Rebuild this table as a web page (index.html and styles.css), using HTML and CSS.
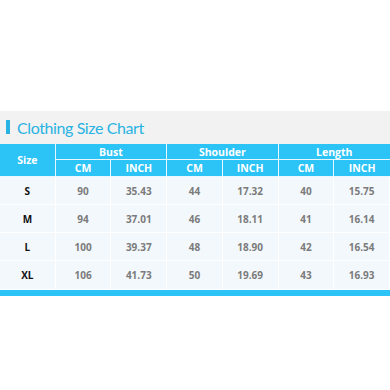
FILE: index.html
```html
<!DOCTYPE html>
<html>
<head>
<meta charset="utf-8">
<link rel="stylesheet" href="styles.css">
</head>
<body>
<div class="top"></div>
<section class="panel">
  <h1 class="title"><span class="accent"></span>Clothing Size Chart</h1>
  <div class="chart">
    <div class="hd size">Size</div>
    <div class="hd grp">Bust</div>
    <div class="hd grp">Shoulder</div>
    <div class="hd grp">Length</div>
    <div class="hd sub">CM</div><div class="hd sub">INCH</div>
    <div class="hd sub">CM</div><div class="hd sub">INCH</div>
    <div class="hd sub">CM</div><div class="hd sub">INCH</div>

    <div class="c s">S</div><div class="c">90</div><div class="c">35.43</div><div class="c">44</div><div class="c">17.32</div><div class="c">40</div><div class="c">15.75</div>
    <div class="c s">M</div><div class="c">94</div><div class="c">37.01</div><div class="c">46</div><div class="c">18.11</div><div class="c">41</div><div class="c">16.14</div>
    <div class="c s">L</div><div class="c">100</div><div class="c">39.37</div><div class="c">48</div><div class="c">18.90</div><div class="c">42</div><div class="c">16.54</div>
    <div class="c s">XL</div><div class="c">106</div><div class="c">41.73</div><div class="c">50</div><div class="c">19.69</div><div class="c">43</div><div class="c">16.93</div>
  </div>
  <div class="bar"></div>
</section>
</body>
</html>
```
FILE: styles.css
```css
html, body {
  margin: 0;
  padding: 0;
  background: #ffffff;
  font-family: "Open Sans", "Noto Sans", sans-serif;
}
.top {
  height: 111px;
}
.panel {
  background: #f2f2f2;
  padding-top: 9px;
}
.title {
  display: flex;
  align-items: center;
  gap: 7px;
  margin: 0;
  padding-left: 6px;
  height: 14px;
  font-family: Lato, "Open Sans", sans-serif;
  font-size: 16px;
  font-weight: 400;
  color: #29b3e3;
  letter-spacing: -0.4px;
}
.accent {
  width: 4px;
  height: 14px;
  background: #29b3e3;
}
.chart {
  margin-top: 10px;
  display: grid;
  grid-template-columns: repeat(7, 1fr);
  grid-template-rows: 16px 17px 28px 28px 28px 29px;
}
.hd {
  background: #2cc3f7;
  color: #ffffff;
  font-size: 10.5px;
  font-weight: 700;
  display: flex;
  align-items: center;
  justify-content: center;
  border-right: 1px solid #e6f7fd;
  border-bottom: 1px solid #e6f7fd;
}
.size {
  grid-row: span 2;
}
.grp {
  grid-column: span 2;
}
.hd:nth-child(4), .hd:nth-child(10) {
  border-right: none;
}
.c {
  background: #f3f8fc;
  color: #7b7b7b;
  font-size: 10px;
  font-weight: 700;
  display: flex;
  align-items: center;
  justify-content: center;
  border-right: 1px solid #ffffff;
  border-bottom: 1px solid #ffffff;
}
.c.s {
  color: #111111;
}
.bar {
  height: 6px;
  background: #2cc3f7;
}
```
